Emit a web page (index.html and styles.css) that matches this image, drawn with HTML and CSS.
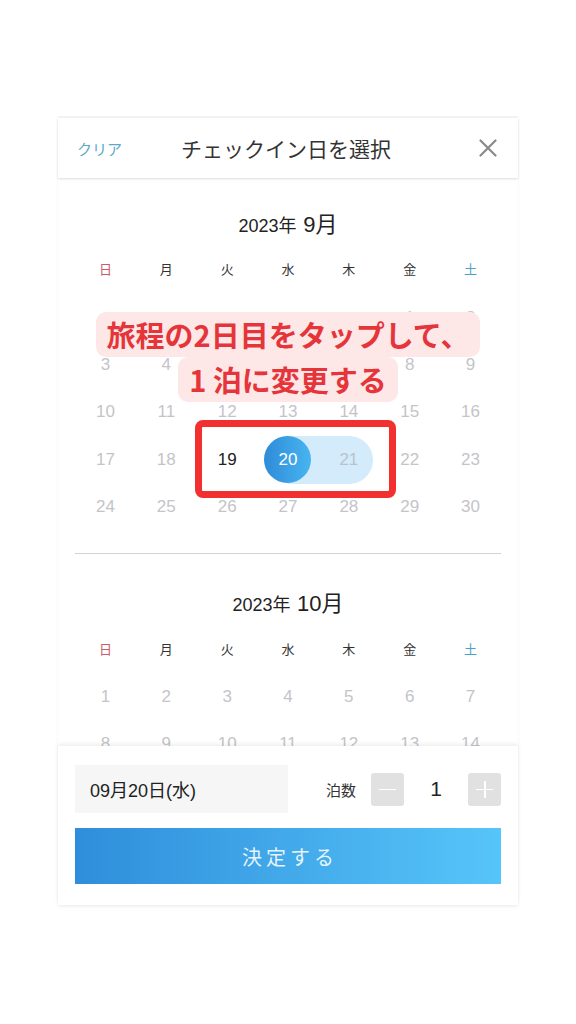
FILE: index.html
```html
<!DOCTYPE html>
<html lang="ja">
<head>
<meta charset="utf-8">
<link rel="stylesheet" href="styles.css">
</head>
<body>
<div class="card">
  <header class="head">
    <span class="clear">クリア</span>
    <span class="title">チェックイン日を選択</span>
    <svg class="close" width="18" height="18" viewBox="0 0 18 18"><path d="M1.5 1.5 L16.5 16.5 M16.5 1.5 L1.5 16.5" stroke="#8a8a8a" stroke-width="2.2" fill="none" stroke-linecap="round"/></svg>
  </header>

  <div class="scroll">
    <section class="month first">
      <h2 class="mtitle"><span class="yr">2023年</span> <span class="mo">9月</span></h2>
      <div class="wk"><span class="sun">日</span><span>月</span><span>火</span><span>水</span><span>木</span><span>金</span><span class="sat">土</span></div>
      <div class="days">
        <span></span><span></span><span></span><span></span><span></span><span>1</span><span>2</span>
        <span>3</span><span>4</span><span>5</span><span>6</span><span>7</span><span>8</span><span>9</span>
        <span>10</span><span>11</span><span>12</span><span>13</span><span>14</span><span>15</span><span>16</span>
        <span>17</span><span>18</span><span class="avail">19</span><span class="sel">20</span><span class="range-end">21</span><span>22</span><span>23</span>
        <span>24</span><span>25</span><span>26</span><span>27</span><span>28</span><span>29</span><span>30</span>
      </div>
    </section>
    <div class="divider"></div>
    <section class="month second">
      <h2 class="mtitle"><span class="yr">2023年</span> <span class="mo">10月</span></h2>
      <div class="wk"><span class="sun">日</span><span>月</span><span>火</span><span>水</span><span>木</span><span>金</span><span class="sat">土</span></div>
      <div class="days">
        <span>1</span><span>2</span><span>3</span><span>4</span><span>5</span><span>6</span><span>7</span>
        <span>8</span><span>9</span><span>10</span><span>11</span><span>12</span><span>13</span><span>14</span>
      </div>
    </section>
  </div>

  <footer class="foot">
    <div class="row">
      <div class="datebox">09月20日(水)</div>
      <div class="nights">
        <span class="nlabel">泊数</span>
        <span class="step"><span class="bar"></span></span>
        <span class="num">1</span>
        <span class="step plus"><span class="bar"></span><span class="bar v"></span></span>
      </div>
    </div>
    <button class="ok">決定する</button>
  </footer>

  <div class="note">
    <div class="nline">旅程の2日目をタップして、</div>
    <div class="nline">1 泊に変更する</div>
  </div>
  <div class="redbox"></div>
</div>
</body>
</html>
```

FILE: styles.css
```css
* { box-sizing: border-box; }
html, body { margin: 0; padding: 0; background: #fff; }
body {
  font-family: "Liberation Sans", "Noto Sans CJK JP", sans-serif;
  color: #222;
  width: 576px;
  height: 1024px;
  overflow: hidden;
}
.card {
  position: relative;
  width: 460px;
  margin: 116px auto 0;
  border-top: 2px solid #f3f3f3;
  box-shadow: 0 2px 3px rgba(0,0,0,0.06);
  background: #fff;
}
.head {
  position: relative;
  z-index: 2;
  height: 60px;
  display: flex;
  align-items: center;
  padding: 0 21px 0 19px;
  background: #fff;
  box-shadow: 0 1px 2px rgba(0,0,0,0.14);
}
.clear {
  font-family: "Noto Sans CJK JP", sans-serif;
  font-size: 15px;
  color: #5ca9c9;
  width: 90px;
}
.title {
  flex: 1;
  text-align: center;
  font-family: "Noto Sans CJK JP", sans-serif;
  font-size: 21px;
  color: #333;
  margin-left: 0;
}
.close { display: block; margin-left: 74px; }

.scroll {
  height: 568px;
  overflow: hidden;
  padding: 0 17px;
}
.month.first { padding-top: 31px; padding-bottom: 23px; }
.month.second { padding-top: 34px; }
.mtitle {
  margin: 0;
  height: 30px;
  line-height: 30px;
  text-align: center;
  font-weight: normal;
  color: #222;
}
.yr { font-size: 18px; }
.mo { font-size: 22px; }
.wk {
  display: grid;
  grid-template-columns: repeat(7, 1fr);
  height: 40px;
  margin-top: 9px;
  align-items: center;
  text-align: center;
  font-family: "Noto Sans CJK JP", sans-serif;
  font-size: 13px;
  color: #333;
}
.second .wk { margin-top: 10px; }
.wk .sun { color: #c95a68; }
.wk .sat { color: #4aa0c8; }
.days {
  display: grid;
  grid-template-columns: repeat(7, 1fr);
  grid-auto-rows: 47.3px;
  margin-top: 6px;
  font-size: 17px;
  color: #c4c4c8;
}
.second .days { margin-top: 5px; }
.days span {
  position: relative;
  display: flex;
  align-items: center;
  justify-content: center;
}
.days .avail { color: #222; }
.days .sel { color: #fff; z-index: 0; }
.days .sel::before {
  content: "";
  position: absolute;
  left: 50%; right: 0;
  top: 50%; height: 48px; margin-top: -24px;
  background: #d3ebfb;
  z-index: -2;
}
.days .sel::after {
  content: "";
  position: absolute;
  left: 50%; top: 50%;
  width: 47px; height: 47px;
  margin: -23.5px 0 0 -23.5px;
  border-radius: 50%;
  background: linear-gradient(90deg, #2f8bd8, #47b5f0);
  z-index: -1;
}
.days .range-end { color: #b9c3cb; z-index: 0; }
.days .range-end::before {
  content: "";
  position: absolute;
  left: 0; width: calc(50% + 24px);
  top: 50%; height: 48px; margin-top: -24px;
  background: #d3ebfb;
  border-radius: 0 24px 24px 0;
  z-index: -1;
}
.divider {
  height: 1px;
  background: #d2d2d2;
}

.foot {
  position: relative;
  z-index: 2;
  background: #fff;
  padding: 19px 17px 21px;
  box-shadow: 0 -2px 4px rgba(0,0,0,0.07);
}
.row {
  display: flex;
  align-items: center;
  justify-content: space-between;
}
.datebox {
  width: 213px;
  height: 48px;
  background: #f6f6f6;
  padding-left: 15px;
  display: flex;
  align-items: center;
  font-size: 18px;
  color: #222;
}
.nights {
  display: flex;
  align-items: center;
}
.nlabel {
  font-family: "Noto Sans CJK JP", sans-serif;
  font-size: 15px;
  color: #333;
  margin-right: 15px;
}
.step {
  position: relative;
  width: 33px;
  height: 33px;
  background: #e1e1e1;
  border-radius: 3px;
  display: flex;
  align-items: center;
  justify-content: center;
}
.bar {
  position: absolute;
  width: 17px;
  height: 1.5px;
  background: #fff;
  left: 8px; top: 16px;
}
.bar.v {
  width: 1.5px;
  height: 17px;
  left: 16px; top: 8px;
}
.num {
  width: 64px;
  text-align: center;
  font-size: 21px;
  color: #222;
}
.ok {
  display: block;
  width: 100%;
  height: 56px;
  margin-top: 15px;
  border: 0;
  background: linear-gradient(90deg, #2f8edb, #56c5f9);
  color: rgba(255,255,255,0.88);
  font-family: "Noto Sans CJK JP", sans-serif;
  font-size: 20px;
  letter-spacing: 4px;
  padding: 0 0 0 4px;
}

.note {
  position: absolute;
  z-index: 5;
  top: 194px;
  left: 0; right: 0;
  display: flex;
  flex-direction: column;
  align-items: center;
}
.nline {
  background: #fde7e7;
  color: #e5353b;
  font-family: "Noto Sans CJK JP", sans-serif;
  font-weight: 700;
  font-size: 29px;
  line-height: 45px;
  height: 45px;
  padding: 0 11px;
  border-radius: 10px;
}
.redbox {
  position: absolute;
  z-index: 5;
  top: 302px;
  left: 137px;
  width: 201px;
  height: 78px;
  border: 7px solid #f23030;
  border-radius: 8px;
}
```
